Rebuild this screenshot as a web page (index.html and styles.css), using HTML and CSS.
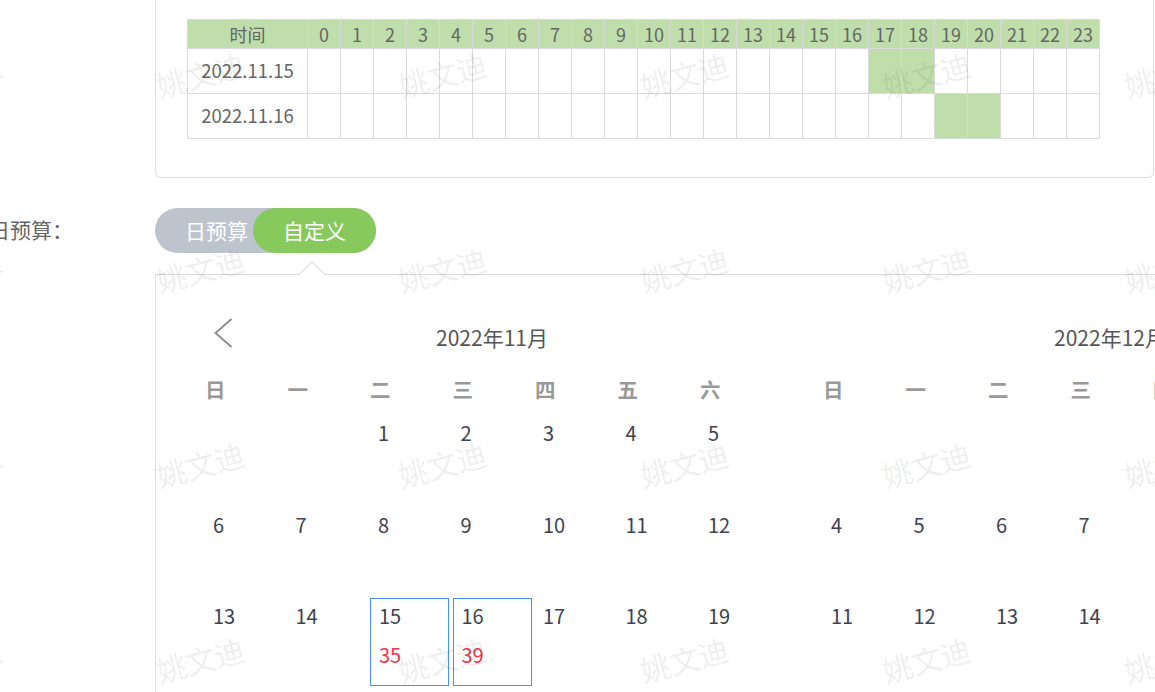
FILE: index.html
```html
<!DOCTYPE html>
<html lang="zh-CN">
<head>
<meta charset="utf-8">
<title>日预算</title>
<link rel="stylesheet" href="styles.css">
</head>
<body>
<div class="page">
  <section class="card schedule">
    <table class="hours">
      <colgroup><col class="c-time"><col span="24" class="c-hour"></colgroup>
      <thead>
        <tr><th>时间</th><th>0</th><th>1</th><th>2</th><th>3</th><th>4</th><th>5</th><th>6</th><th>7</th><th>8</th><th>9</th><th>10</th><th>11</th><th>12</th><th>13</th><th>14</th><th>15</th><th>16</th><th>17</th><th>18</th><th>19</th><th>20</th><th>21</th><th>22</th><th>23</th></tr>
      </thead>
      <tbody>
        <tr><td class="day">2022.11.15</td><td></td><td></td><td></td><td></td><td></td><td></td><td></td><td></td><td></td><td></td><td></td><td></td><td></td><td></td><td></td><td></td><td></td><td class="on"></td><td class="on"></td><td></td><td></td><td></td><td></td><td></td></tr>
        <tr><td class="day">2022.11.16</td><td></td><td></td><td></td><td></td><td></td><td></td><td></td><td></td><td></td><td></td><td></td><td></td><td></td><td></td><td></td><td></td><td></td><td></td><td></td><td class="on"></td><td class="on"></td><td></td><td></td><td></td></tr>
      </tbody>
    </table>
  </section>

  <div class="form-row">
    <div class="label"><span>日预算：</span></div>
    <div class="toggle">
      <span class="opt">日预算</span>
      <span class="opt active">自定义</span>
    </div>
  </div>

  <div class="cal-wrap">
    <div class="calendar">
      <div class="month">
        <div class="month-head">
          <span class="nav"><svg width="20" height="30" viewBox="0 0 20 30"><polyline points="18.5,1 2.5,15 18.5,29" fill="none" stroke="#8a8a8a" stroke-width="1.8"/></svg></span>
          <span class="title">2022年11月</span>
          <span></span>
        </div>
        <div class="weekdays"><span>日</span><span>一</span><span>二</span><span>三</span><span>四</span><span>五</span><span>六</span></div>
        <div class="days">
          <div class="d"></div><div class="d"></div><div class="d"><b>1</b></div><div class="d"><b>2</b></div><div class="d"><b>3</b></div><div class="d"><b>4</b></div><div class="d"><b>5</b></div>
          <div class="d"><b>6</b></div><div class="d"><b>7</b></div><div class="d"><b>8</b></div><div class="d"><b>9</b></div><div class="d"><b>10</b></div><div class="d"><b>11</b></div><div class="d"><b>12</b></div>
          <div class="d"><b>13</b></div><div class="d"><b>14</b></div><div class="d sel"><b>15</b><i>35</i></div><div class="d sel"><b>16</b><i>39</i></div><div class="d"><b>17</b></div><div class="d"><b>18</b></div><div class="d"><b>19</b></div>
          <div class="d"><b>20</b></div><div class="d"><b>21</b></div><div class="d"><b>22</b></div><div class="d"><b>23</b></div><div class="d"><b>24</b></div><div class="d"><b>25</b></div><div class="d"><b>26</b></div>
        </div>
      </div>
      <div class="month">
        <div class="month-head">
          <span></span>
          <span class="title">2022年12月</span>
          <span></span>
        </div>
        <div class="weekdays"><span>日</span><span>一</span><span>二</span><span>三</span><span>四</span><span>五</span><span>六</span></div>
        <div class="days">
          <div class="d"></div><div class="d"></div><div class="d"></div><div class="d"></div><div class="d"><b>1</b></div><div class="d"><b>2</b></div><div class="d"><b>3</b></div>
          <div class="d"><b>4</b></div><div class="d"><b>5</b></div><div class="d"><b>6</b></div><div class="d"><b>7</b></div><div class="d"><b>8</b></div><div class="d"><b>9</b></div><div class="d"><b>10</b></div>
          <div class="d"><b>11</b></div><div class="d"><b>12</b></div><div class="d"><b>13</b></div><div class="d"><b>14</b></div><div class="d"><b>15</b></div><div class="d"><b>16</b></div><div class="d"><b>17</b></div>
          <div class="d"><b>18</b></div><div class="d"><b>19</b></div><div class="d"><b>20</b></div><div class="d"><b>21</b></div><div class="d"><b>22</b></div><div class="d"><b>23</b></div><div class="d"><b>24</b></div>
        </div>
      </div>
    </div>
    <div class="caret"></div>
  </div>

  <div class="watermarks">
    <span>姚文迪</span><span>姚文迪</span><span>姚文迪</span><span>姚文迪</span><span>姚文迪</span><span>姚文迪</span>
    <span>姚文迪</span><span>姚文迪</span><span>姚文迪</span><span>姚文迪</span><span>姚文迪</span><span>姚文迪</span>
    <span>姚文迪</span><span>姚文迪</span><span>姚文迪</span><span>姚文迪</span><span>姚文迪</span><span>姚文迪</span>
    <span>姚文迪</span><span>姚文迪</span><span>姚文迪</span><span>姚文迪</span><span>姚文迪</span><span>姚文迪</span>
  </div>
</div>
</body>
</html>
```

FILE: styles.css
```css
html, body {
  margin: 0;
  padding: 0;
  background: #fff;
}
body {
  width: 1155px;
  height: 692px;
  overflow: hidden;
  font-family: "Noto Sans CJK SC", "Microsoft YaHei", sans-serif;
  color: #666;
}
.page {
  position: relative;
  width: 1155px;
  height: 692px;
  overflow: hidden;
}

/* schedule card */
.card.schedule {
  margin-left: 155px;
  width: 999px;
  box-sizing: border-box;
  border: 1px solid #dcdcdc;
  border-top: none;
  border-radius: 0 0 6px 6px;
  padding: 19px 0 38px 31px;
}
.hours {
  border-collapse: collapse;
  table-layout: fixed;
  width: 913px;
  font-size: 18px;
  color: #666;
}
.hours .c-time { width: 120px; }
.hours .c-hour { width: 33px; }
.hours th {
  height: 28px;
  padding: 0;
  font-weight: normal;
  background: #bfdeab;
  border: 1px solid #dadada;
  text-align: center;
  line-height: 26px;
}
.hours td {
  height: 41px;
  padding: 0 0 3px;
  border: 1px solid #dadada;
  text-align: center;
}
.hours td.day {
  font-size: 18.5px;
}
.hours td.on {
  background: #bfdeab;
}

/* budget row */
.form-row {
  display: flex;
  align-items: center;
  margin-top: 30px;
  height: 45px;
}
.label {
  width: 155px;
  box-sizing: border-box;
  padding-right: 82px;
  padding-bottom: 3px;
  display: flex;
  justify-content: flex-end;
  font-size: 21px;
  color: #666;
  white-space: nowrap;
}
.toggle {
  display: flex;
  height: 45px;
  border-radius: 23px;
  background: #bec4ce;
  font-size: 21px;
  color: #fff;
}
.toggle .opt {
  display: flex;
  align-items: center;
  padding: 0 5px 2px 30px;
  border-radius: 23px;
  white-space: nowrap;
}
.toggle .opt.active {
  background: #88c95e;
  padding: 0 30px 2px;
}

/* calendar */
.cal-wrap {
  position: relative;
  margin-top: 21px;
}
.calendar {
  margin-left: 155px;
  width: 1400px;
  height: 520px;
  border-top: 1px solid #dcdcdc;
  border-left: 1px solid #dcdcdc;
  padding: 43px 0 0 49px;
  display: flex;
  gap: 44px;
}
.caret {
  position: absolute;
  left: 302px;
  top: -9px;
  width: 19px;
  height: 19px;
  background: #fff;
  border-top: 1px solid #dcdcdc;
  border-left: 1px solid #dcdcdc;
  transform: rotate(45deg);
}
.month {
  width: 574px;
  flex: none;
}
.month-head {
  display: grid;
  grid-template-columns: 1fr auto 1fr;
  height: 40px;
}
.month-head .nav {
  padding-left: 8px;
  height: 30px;
}
.month-head .nav svg { display: block; }
.month-head .title {
  font-size: 21px;
  line-height: 38px;
  color: #555;
  white-space: nowrap;
}
.weekdays {
  display: grid;
  grid-template-columns: repeat(7, 79px);
  column-gap: 3.5px;
  margin-top: 12px;
  height: 38px;
  line-height: 38px;
  font-size: 20.5px;
  font-weight: bold;
  color: #999;
}
.days {
  display: grid;
  grid-template-columns: repeat(7, 79px);
  grid-auto-rows: 88px;
  column-gap: 3.5px;
  row-gap: 3.5px;
  margin-top: 7px;
}
.d {
  box-sizing: border-box;
  border: 1px solid transparent;
  padding: 7px 7px;
}
.d.sel {
  border-color: #4b8ef5;
  padding-left: 8px;
}
.d b {
  display: block;
  font-weight: normal;
  font-size: 20px;
  line-height: 20px;
  color: #3e4350;
}
.d i {
  display: block;
  font-style: normal;
  font-size: 20px;
  line-height: 20px;
  margin-top: 19px;
  color: #f3344a;
}

/* watermark overlay */
.watermarks {
  position: absolute;
  left: -163px;
  top: -24px;
  width: 1452px;
  height: 780px;
  display: grid;
  grid-template-columns: repeat(6, 242px);
  grid-auto-rows: 195px;
  place-items: center;
  pointer-events: none;
}
.watermarks span {
  font-size: 30px;
  color: rgba(0, 0, 0, 0.085);
  transform: rotate(-15deg);
  white-space: nowrap;
}
```
